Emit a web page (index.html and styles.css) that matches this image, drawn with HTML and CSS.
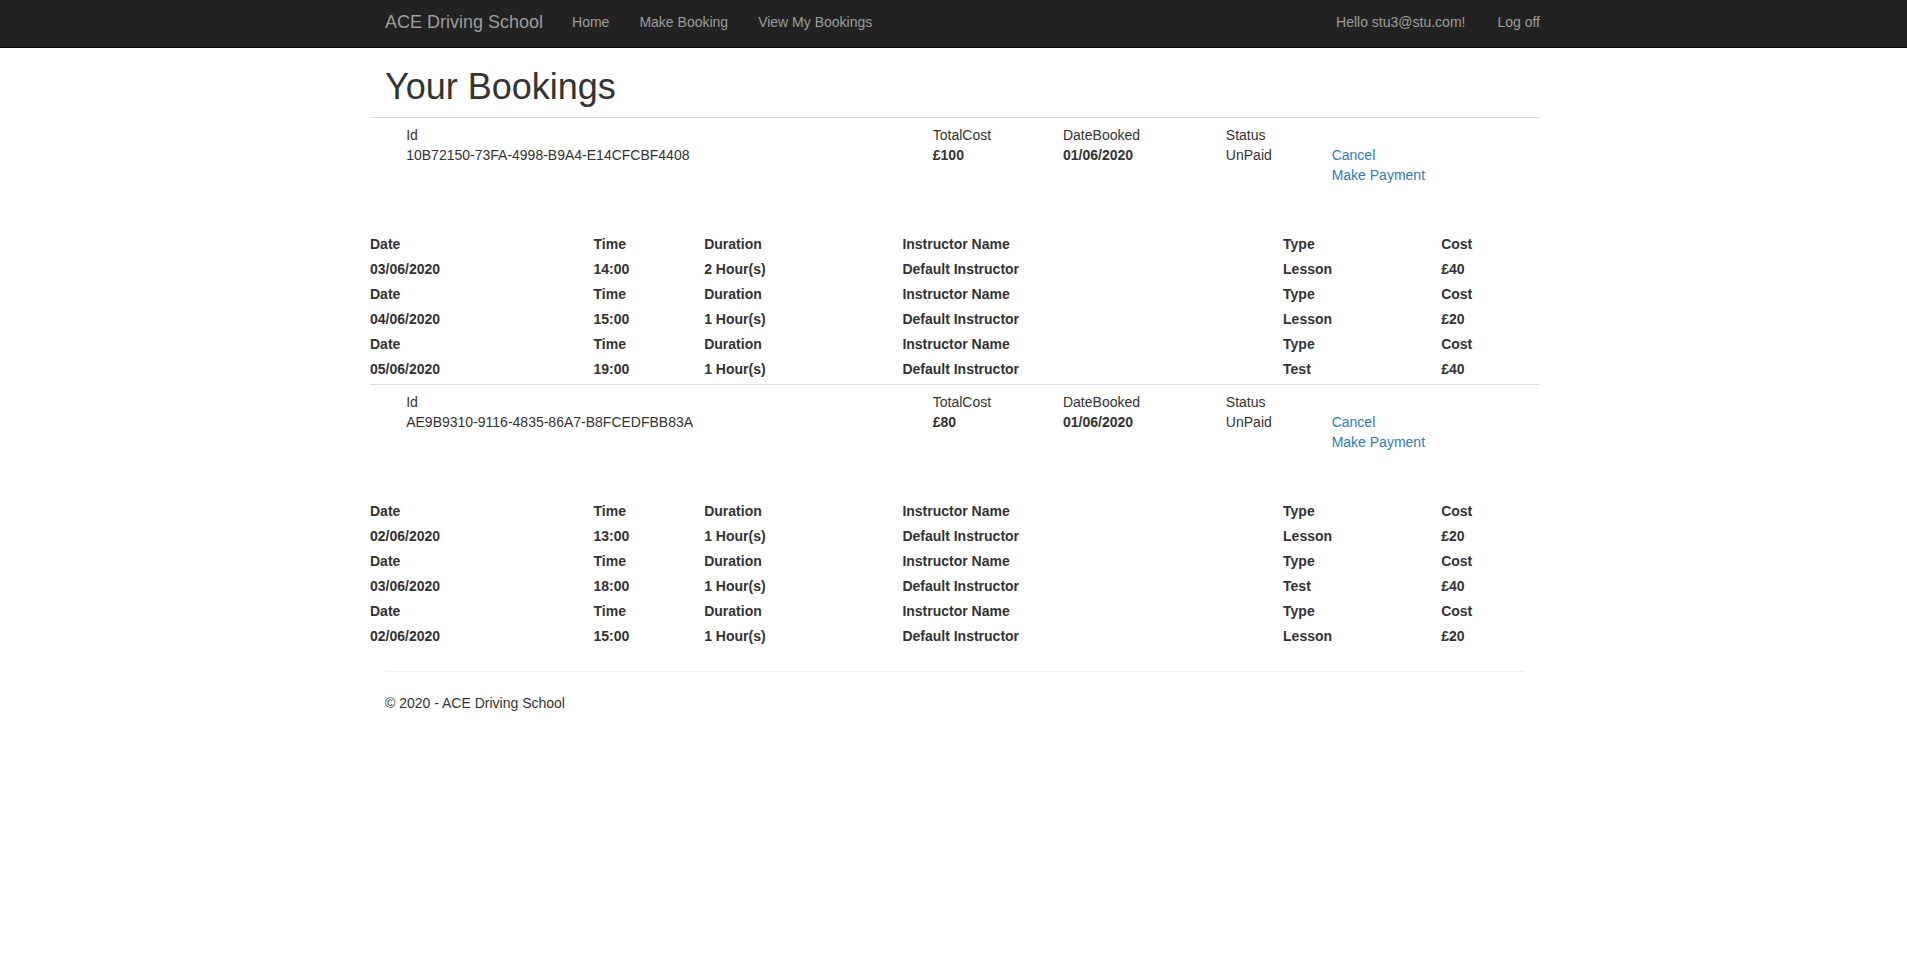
FILE: index.html
```html
<!DOCTYPE html>
<html lang="en">
<head>
<meta charset="utf-8">
<title>Your Bookings - ACE Driving School</title>
<link rel="stylesheet" href="styles.css">
</head>
<body>
<nav class="navbar">
  <div class="nav-inner">
    <a class="brand" href="#">ACE Driving School</a>
    <ul class="nav-links">
      <li><a href="#">Home</a></li>
      <li><a href="#">Make Booking</a></li>
      <li><a href="#">View My Bookings</a></li>
    </ul>
    <ul class="nav-right">
      <li><a href="#">Hello stu3@stu.com!</a></li>
      <li><a href="#">Log off</a></li>
    </ul>
  </div>
</nav>

<div class="container">
  <h1 class="page-title">Your Bookings</h1>

  <div class="bookings">
    <section class="booking">
      <div class="summary">
        <div class="field">
          <div class="label">Id</div>
          <div class="value">10B72150-73FA-4998-B9A4-E14CFCBF4408</div>
        </div>
        <div class="field">
          <div class="label">TotalCost</div>
          <div class="value strong">£100</div>
        </div>
        <div class="field">
          <div class="label">DateBooked</div>
          <div class="value strong">01/06/2020</div>
        </div>
        <div class="field">
          <div class="label">Status</div>
          <div class="value">UnPaid</div>
        </div>
        <div class="field actions">
          <div class="label"></div>
          <a class="link" href="#">Cancel</a>
          <a class="link" href="#">Make Payment</a>
        </div>
      </div>
      <div class="lessons">
        <div class="lesson-row"><span>Date</span><span>Time</span><span>Duration</span><span>Instructor Name</span><span>Type</span><span>Cost</span></div>
        <div class="lesson-row"><span>03/06/2020</span><span>14:00</span><span>2 Hour(s)</span><span>Default Instructor</span><span>Lesson</span><span>£40</span></div>
        <div class="lesson-row"><span>Date</span><span>Time</span><span>Duration</span><span>Instructor Name</span><span>Type</span><span>Cost</span></div>
        <div class="lesson-row"><span>04/06/2020</span><span>15:00</span><span>1 Hour(s)</span><span>Default Instructor</span><span>Lesson</span><span>£20</span></div>
        <div class="lesson-row"><span>Date</span><span>Time</span><span>Duration</span><span>Instructor Name</span><span>Type</span><span>Cost</span></div>
        <div class="lesson-row"><span>05/06/2020</span><span>19:00</span><span>1 Hour(s)</span><span>Default Instructor</span><span>Test</span><span>£40</span></div>
      </div>
    </section>

    <section class="booking">
      <div class="summary">
        <div class="field">
          <div class="label">Id</div>
          <div class="value">AE9B9310-9116-4835-86A7-B8FCEDFBB83A</div>
        </div>
        <div class="field">
          <div class="label">TotalCost</div>
          <div class="value strong">£80</div>
        </div>
        <div class="field">
          <div class="label">DateBooked</div>
          <div class="value strong">01/06/2020</div>
        </div>
        <div class="field">
          <div class="label">Status</div>
          <div class="value">UnPaid</div>
        </div>
        <div class="field actions">
          <div class="label"></div>
          <a class="link" href="#">Cancel</a>
          <a class="link" href="#">Make Payment</a>
        </div>
      </div>
      <div class="lessons">
        <div class="lesson-row"><span>Date</span><span>Time</span><span>Duration</span><span>Instructor Name</span><span>Type</span><span>Cost</span></div>
        <div class="lesson-row"><span>02/06/2020</span><span>13:00</span><span>1 Hour(s)</span><span>Default Instructor</span><span>Lesson</span><span>£20</span></div>
        <div class="lesson-row"><span>Date</span><span>Time</span><span>Duration</span><span>Instructor Name</span><span>Type</span><span>Cost</span></div>
        <div class="lesson-row"><span>03/06/2020</span><span>18:00</span><span>1 Hour(s)</span><span>Default Instructor</span><span>Test</span><span>£40</span></div>
        <div class="lesson-row"><span>Date</span><span>Time</span><span>Duration</span><span>Instructor Name</span><span>Type</span><span>Cost</span></div>
        <div class="lesson-row"><span>02/06/2020</span><span>15:00</span><span>1 Hour(s)</span><span>Default Instructor</span><span>Lesson</span><span>£20</span></div>
      </div>
    </section>
  </div>

  <hr class="footer-rule">
  <footer class="footer">
    <p>© 2020 - ACE Driving School</p>
  </footer>
</div>
</body>
</html>
```

FILE: styles.css
```css
* {
  box-sizing: border-box;
}

html, body {
  background: #fff;
}

body {
  margin: 0;
  padding: 0 0 0 3px;
  font-family: "Liberation Sans", Arial, Helvetica, sans-serif;
  font-size: 14px;
  line-height: 20px;
  color: #333;
}

a {
  text-decoration: none;
}

ul {
  list-style: none;
  margin: 0;
  padding: 0;
}

/* Navbar */
.navbar {
  background: #222;
  border-bottom: 1px solid #080808;
  height: 48px;
  margin-left: -3px;
  padding-left: 3px;
}

.nav-inner {
  width: 1170px;
  margin: 0 auto;
  display: flex;
  align-items: flex-start;
  padding: 12px 0 0 15px;
}

.brand {
  color: #9d9d9d;
  font-size: 18px;
  line-height: 20px;
  margin-right: 29px;
}

.nav-links {
  display: flex;
  gap: 30px;
}

.nav-links a,
.nav-right a {
  color: #9d9d9d;
  font-size: 14px;
  line-height: 20px;
}

.nav-right {
  display: flex;
  gap: 32px;
  margin-left: auto;
}

/* Content */
.container {
  width: 1170px;
  margin: 0 auto;
  padding: 0 15px;
}

.page-title {
  font-size: 36px;
  font-weight: 500;
  line-height: 40px;
  margin: 19px 0 10px;
  color: #333;
}

.bookings {
  margin: 0 -15px;
}

.booking {
  border-top: 1px solid #ddd;
}

.summary {
  display: grid;
  grid-template-columns: 526.6px 130.2px 162.9px 105.8px 1fr;
  padding: 7px 0 8px 36.2px;
}

.field {
  display: flex;
  flex-direction: column;
}

.label {
  height: 20px;
}

.strong {
  font-weight: bold;
}

.link {
  color: #337ab7;
  display: block;
}

.lessons {
  margin: 39px 0 2px;
}

.lesson-row {
  display: grid;
  grid-template-columns: 223.5px 110.7px 198.2px 380.7px 158.1px 1fr;
  height: 25px;
  line-height: 25px;
  font-weight: bold;
}

/* Footer */
.footer-rule {
  border: 0;
  border-top: 1px solid #eee;
  margin: 22px 0 21px;
  height: 0;
}

.footer p {
  margin: 0 0 10px;
}
```
